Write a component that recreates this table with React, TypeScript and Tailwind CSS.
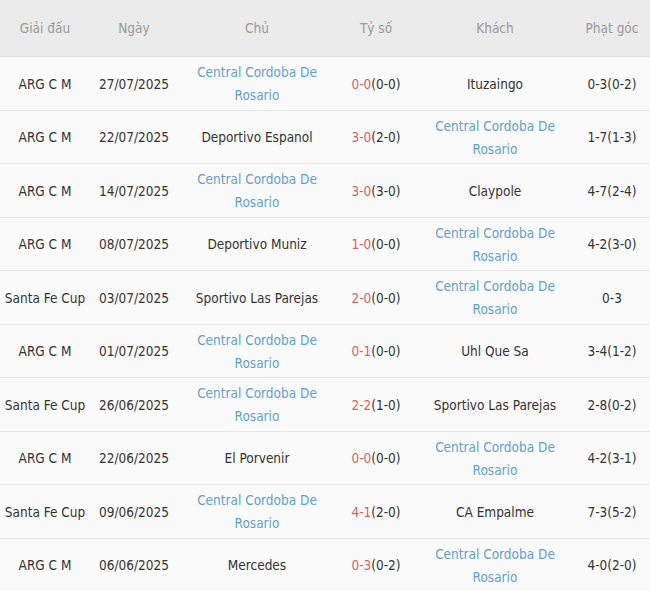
import React from "react";

type Row = {
  league: string;
  date: string;
  home: string;
  homeBlue: boolean;
  score: string;
  ht: string;
  away: string;
  awayBlue: boolean;
  corner: string;
};

const CC = "Central Cordoba De Rosario";

const rows: Row[] = [
  { league: "ARG C M", date: "27/07/2025", home: CC, homeBlue: true, score: "0-0", ht: "(0-0)", away: "Ituzaingo", awayBlue: false, corner: "0-3(0-2)" },
  { league: "ARG C M", date: "22/07/2025", home: "Deportivo Espanol", homeBlue: false, score: "3-0", ht: "(2-0)", away: CC, awayBlue: true, corner: "1-7(1-3)" },
  { league: "ARG C M", date: "14/07/2025", home: CC, homeBlue: true, score: "3-0", ht: "(3-0)", away: "Claypole", awayBlue: false, corner: "4-7(2-4)" },
  { league: "ARG C M", date: "08/07/2025", home: "Deportivo Muniz", homeBlue: false, score: "1-0", ht: "(0-0)", away: CC, awayBlue: true, corner: "4-2(3-0)" },
  { league: "Santa Fe Cup", date: "03/07/2025", home: "Sportivo Las Parejas", homeBlue: false, score: "2-0", ht: "(0-0)", away: CC, awayBlue: true, corner: "0-3" },
  { league: "ARG C M", date: "01/07/2025", home: CC, homeBlue: true, score: "0-1", ht: "(0-0)", away: "Uhl Que Sa", awayBlue: false, corner: "3-4(1-2)" },
  { league: "Santa Fe Cup", date: "26/06/2025", home: CC, homeBlue: true, score: "2-2", ht: "(1-0)", away: "Sportivo Las Parejas", awayBlue: false, corner: "2-8(0-2)" },
  { league: "ARG C M", date: "22/06/2025", home: "El Porvenir", homeBlue: false, score: "0-0", ht: "(0-0)", away: CC, awayBlue: true, corner: "4-2(3-1)" },
  { league: "Santa Fe Cup", date: "09/06/2025", home: CC, homeBlue: true, score: "4-1", ht: "(2-0)", away: "CA Empalme", awayBlue: false, corner: "7-3(5-2)" },
  { league: "ARG C M", date: "06/06/2025", home: "Mercedes", homeBlue: false, score: "0-3", ht: "(0-2)", away: CC, awayBlue: true, corner: "4-0(2-0)" },
];

function Team({ name, blue }: { name: string; blue: boolean }) {
  if (blue) {
    return (
      <span className="text-[#619fd2]">
        Central Cordoba De
        <br />
        Rosario
      </span>
    );
  }
  return <span className="text-[#333333]">{name}</span>;
}

export default function App() {
  const font = { fontFamily: '"DejaVu Sans Condensed", "DejaVu Sans", Tahoma, sans-serif' };
  return (
    <div className="w-[650px] h-[591px] overflow-hidden bg-[#fafafa] text-[13.5px]" style={font}>
      <div className="grid grid-cols-[90px_88px_158px_80px_158px_76px] h-[57px] bg-[#ebebeb] border-b border-[#e0e0e0] text-[#999999] items-center text-center">
        <div className="pt-[1px]">Giải đấu</div>
        <div className="pt-[1px]">Ngày</div>
        <div className="pt-[1px]">Chủ</div>
        <div className="pt-[1px]">Tỷ số</div>
        <div className="pt-[1px]">Khách</div>
        <div className="pt-[1px]">Phạt góc</div>
      </div>
      {rows.map((r, i) => (
        <div
          key={i}
          className="grid grid-cols-[90px_88px_158px_80px_158px_76px] h-[53.5px] pt-[2px] border-b border-[#e6e6e6] items-center text-center leading-[23px] text-[#333333]"
        >
          <div>{r.league}</div>
          <div>{r.date}</div>
          <div>
            <Team name={r.home} blue={r.homeBlue} />
          </div>
          <div>
            <span className="text-[#d9625f]">{r.score}</span>
            <span>{r.ht}</span>
          </div>
          <div>
            <Team name={r.away} blue={r.awayBlue} />
          </div>
          <div>{r.corner}</div>
        </div>
      ))}
    </div>
  );
}
